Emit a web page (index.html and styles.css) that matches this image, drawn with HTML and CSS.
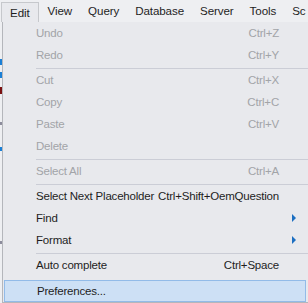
FILE: index.html
```html
<!DOCTYPE html>
<html lang="en">

<head>
    <meta charset="UTF-8">
    <title>Edit menu</title>
    <link rel="stylesheet" href="styles.css">
</head>

<body>
    <div class="menubar">
        <div class="menu-title open">Edit</div>
        <div class="menu-title">View</div>
        <div class="menu-title">Query</div>
        <div class="menu-title">Database</div>
        <div class="menu-title">Server</div>
        <div class="menu-title">Tools</div>
        <div class="menu-title">Sc</div>
    </div>

    <div class="below">
        <!-- bits of the window behind the menu -->
        <div class="behind">
            <span class="bit blue" style="height: 6px; margin-top: 37px"></span>
            <span class="bit blue" style="height: 6px; margin-top: 7px"></span>
            <span class="bit red" style="height: 7px; margin-top: 9px"></span>
            <span class="bit grey" style="height: 3px; margin-top: 28px"></span>
            <span class="bit blue" style="height: 4px; margin-top: 22px"></span>
            <span class="bit grey" style="height: 3px; margin-top: 90px"></span>
        </div>

        <div class="dropdown">
            <div class="item disabled"><span class="label">Undo</span><span class="keys">Ctrl+Z</span><span class="sub"></span></div>
            <div class="item disabled"><span class="label">Redo</span><span class="keys">Ctrl+Y</span><span class="sub"></span></div>
            <div class="separator"></div>
            <div class="item disabled"><span class="label">Cut</span><span class="keys">Ctrl+X</span><span class="sub"></span></div>
            <div class="item disabled"><span class="label">Copy</span><span class="keys">Ctrl+C</span><span class="sub"></span></div>
            <div class="item disabled"><span class="label">Paste</span><span class="keys">Ctrl+V</span><span class="sub"></span></div>
            <div class="item disabled"><span class="label">Delete</span><span class="keys"></span><span class="sub"></span></div>
            <div class="separator"></div>
            <div class="item disabled"><span class="label">Select All</span><span class="keys">Ctrl+A</span><span class="sub"></span></div>
            <div class="separator"></div>
            <div class="item"><span class="label">Select Next Placeholder</span><span class="keys">Ctrl+Shift+OemQuestion</span><span class="sub"></span></div>
            <div class="item"><span class="label">Find</span><span class="keys"></span><span class="sub"><span class="arrow"></span></span></div>
            <div class="item"><span class="label">Format</span><span class="keys"></span><span class="sub"><span class="arrow"></span></span></div>
            <div class="separator"></div>
            <div class="item"><span class="label">Auto complete</span><span class="keys">Ctrl+Space</span><span class="sub"></span></div>
            <div class="item hover"><span class="label">Preferences...</span><span class="keys"></span><span class="sub"></span></div>
        </div>
    </div>
</body>

</html>
```

FILE: styles.css
```css
:root {
    --bar-color: #eeeff2;
    --menu-color: #e8e9ed;
    --text-color: #1e1e1e;
    --disabled-color: #a2a4a8;
    --separator-color: #cbcdd6;
    --hover-color: #cde0f5;
    --hover-border: #92bbe8;
    --arrow-color: #1c6fc1;
}

* {
    box-sizing: border-box;
    margin: 0;
    padding: 0;
}

body {
    font-family: 'Liberation Sans', Arial, sans-serif;
    font-size: 11.5px;
    letter-spacing: -0.2px;
    color: var(--text-color);
    background-color: var(--bar-color);
    width: 308px;
    height: 303px;
    overflow: hidden;
}

.menubar {
    display: flex;
    height: 22px;
    padding-left: 1px;
    white-space: nowrap;
    overflow: hidden;
}

.menu-title {
    flex-shrink: 0;
    padding: 0 8px;
    line-height: 22px;
    font-size: 11.6px;
    letter-spacing: -0.1px;
}

.menu-title.open {
    background-color: var(--menu-color);
    border: 1px solid #c6c8cc;
    border-bottom: none;
    margin: 2px 1px 0 0;
    line-height: 19px;
    padding: 0 8px 0 8px;
}

.below {
    display: flex;
}

.behind {
    width: 2px;
    display: flex;
    flex-direction: column;
}

.bit {
    display: block;
    width: 2px;
}

.bit.blue {
    background-color: #1a7fd6;
}

.bit.red {
    background-color: #7a1010;
}

.bit.grey {
    background-color: #8c8c9c;
}

.dropdown {
    flex: 1;
    height: 281px;
    background-color: var(--menu-color);
    border-left: 1px solid #b4b6bb;
    border-bottom: 1px solid #b4b6bb;
}

.item {
    display: flex;
    height: 22px;
    line-height: 22px;
    padding-left: 33px;
    white-space: nowrap;
}

.item .label {
    flex: 1;
}

.item .keys {
    flex-shrink: 0;
    text-align: right;
}

.item .sub {
    flex-shrink: 0;
    width: 29px;
    display: flex;
    align-items: center;
    padding-left: 13px;
}

.arrow {
    width: 0;
    height: 0;
    border-top: 4px solid transparent;
    border-bottom: 4px solid transparent;
    border-left: 4px solid var(--arrow-color);
}

.item.disabled {
    color: var(--disabled-color);
}

.item.hover {
    margin: 4px 0 0 1px;
    width: 302px;
    padding-left: 32px;
    line-height: 20px;
    background-color: var(--hover-color);
    border: 1px solid var(--hover-border);
}

.separator {
    height: 1px;
    margin: 2px 0 0 33px;
    background-color: var(--separator-color);
}
```
